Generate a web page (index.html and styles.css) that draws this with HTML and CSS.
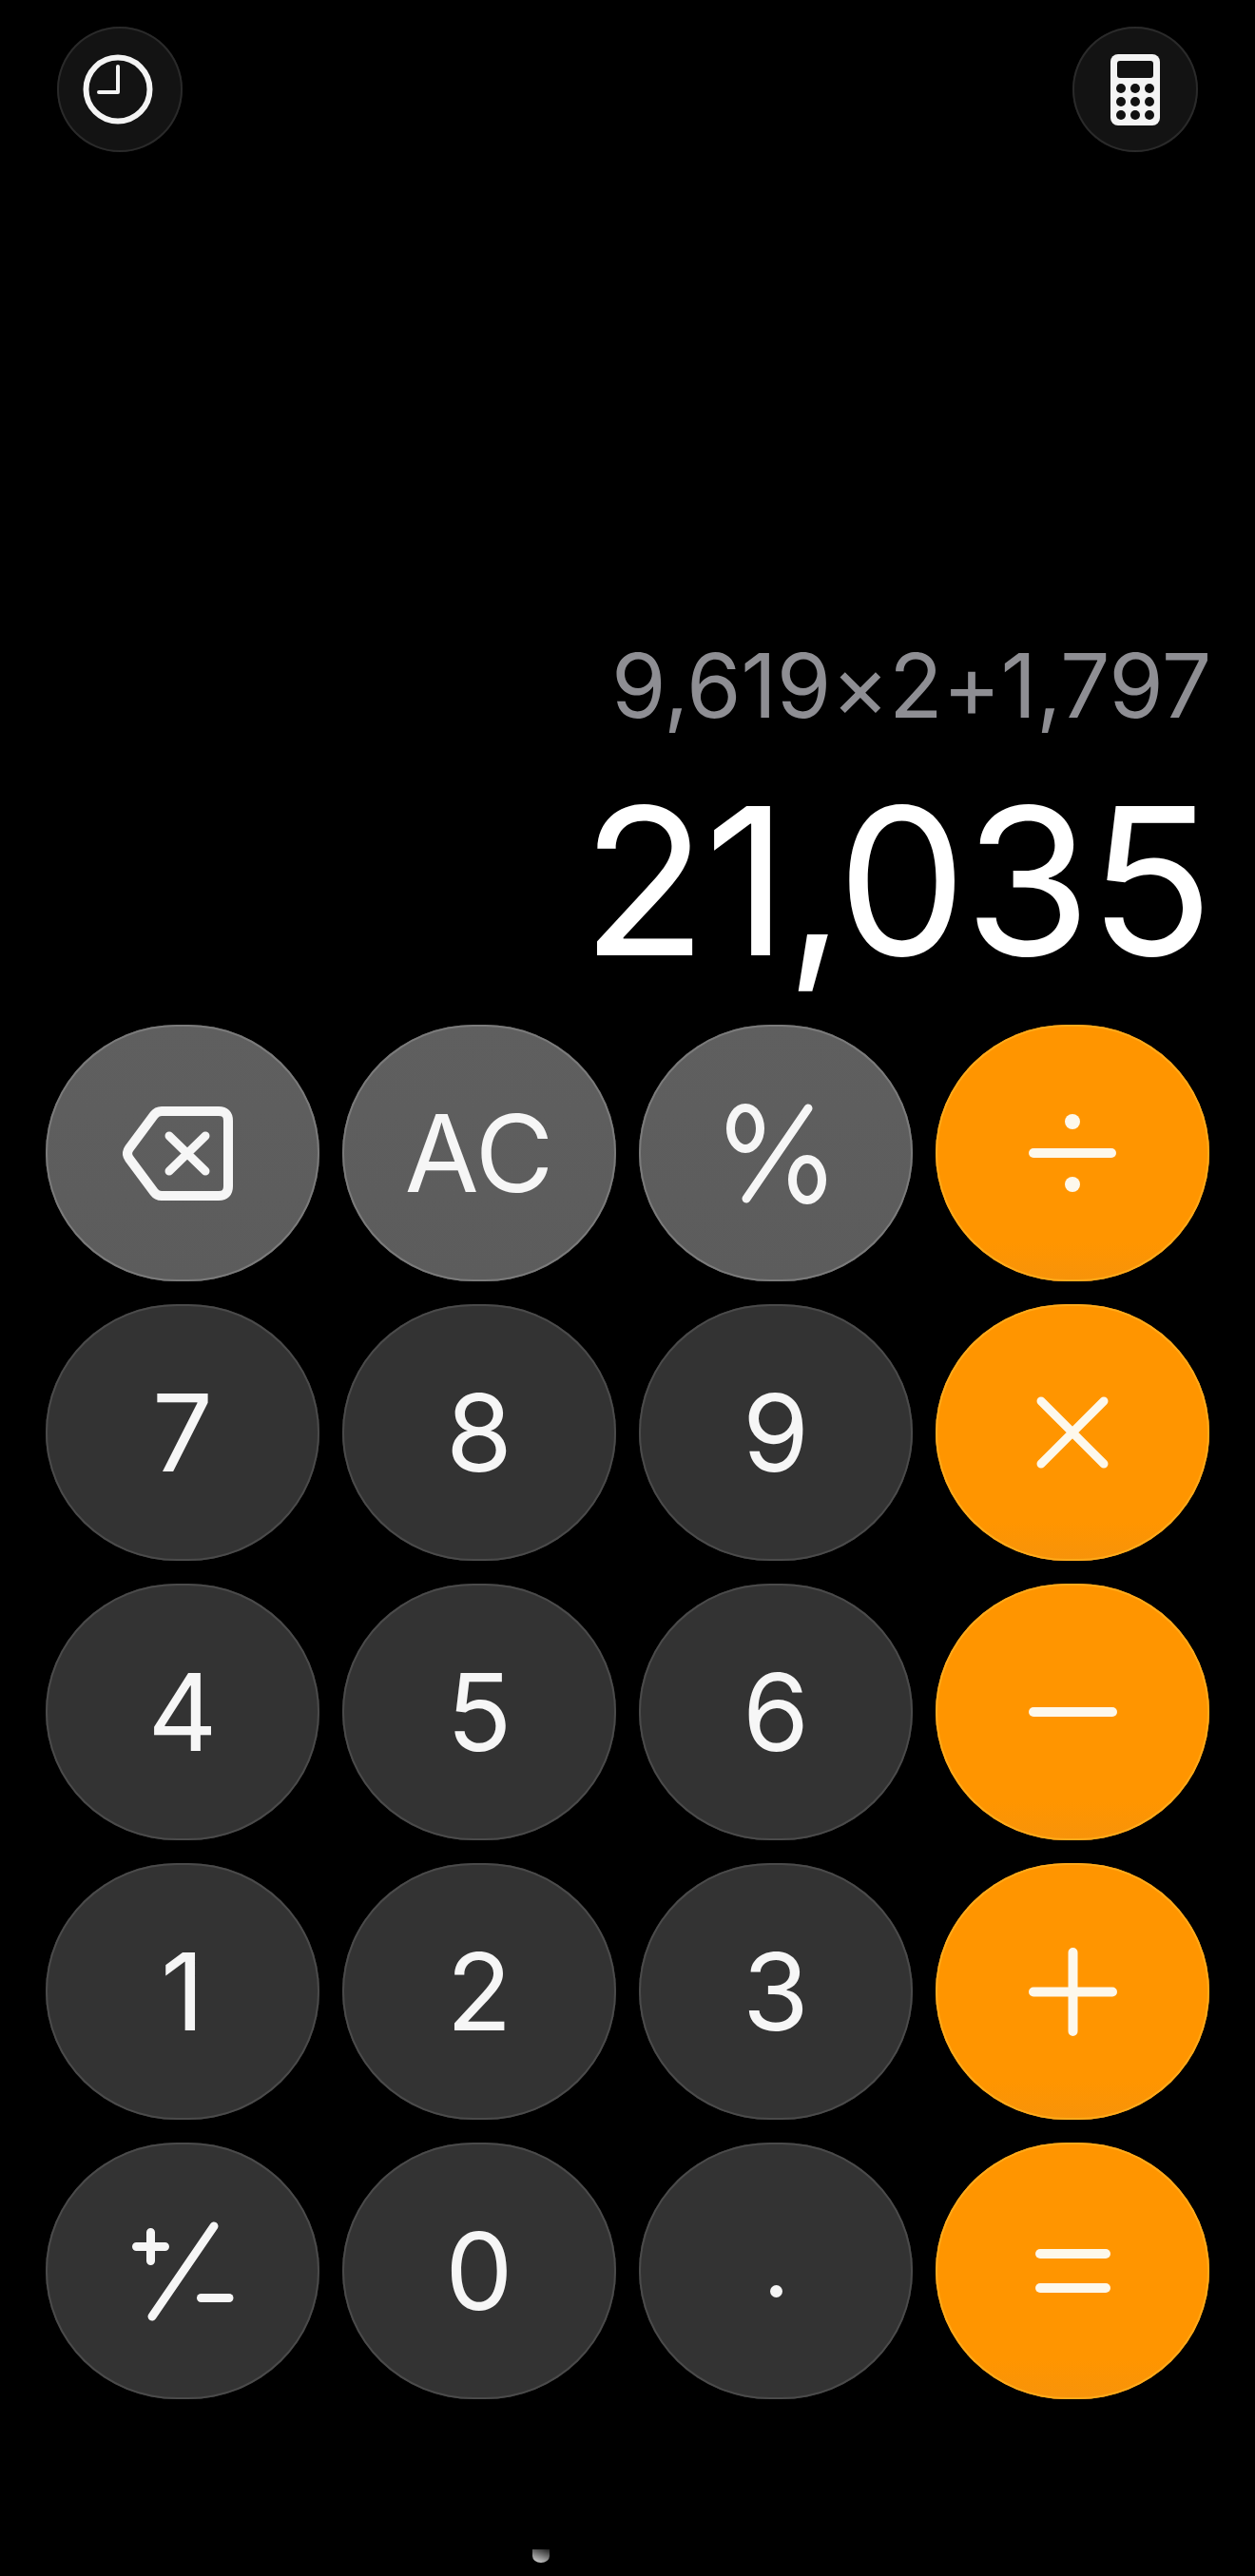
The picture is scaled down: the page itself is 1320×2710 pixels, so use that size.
FILE: index.html
```html
<!DOCTYPE html>
<html lang="en">

<head>
    <meta charset="UTF-8">
    <meta name="viewport" content="width=device-width, initial-scale=1.0">
    <title>Calculator</title>
    <link rel="stylesheet" href="styles.css">
</head>

<body>
    <div class="page-container">
        <!-- top buttons -->
        <div class="toolbar">
            <div class="tool-btn">
                <svg class="clock-icon" width="74" height="74" viewBox="0 0 74 74" fill="none" stroke="#f4f4f4" stroke-linecap="round" stroke-linejoin="round">
                    <circle cx="37" cy="37" r="33.5" stroke-width="6" />
                    <path d="M37 13V40H17" stroke-width="4" />
                </svg>
            </div>
            <div class="tool-btn">
                <svg width="52" height="75" viewBox="0 0 52 75">
                    <rect width="52" height="75" rx="8" fill="#f4f4f4" />
                    <rect x="7" y="7" width="38" height="18" rx="3" fill="#111" />
                    <g fill="#111">
                        <circle cx="11" cy="36" r="5" /><circle cx="26" cy="36" r="5" /><circle cx="41" cy="36" r="5" />
                        <circle cx="11" cy="50" r="5" /><circle cx="26" cy="50" r="5" /><circle cx="41" cy="50" r="5" />
                        <circle cx="11" cy="64" r="5" /><circle cx="26" cy="64" r="5" /><circle cx="41" cy="64" r="5" />
                    </g>
                </svg>
            </div>
        </div>

        <!-- display -->
        <div class="display">
            <div class="expression">9,619×2+1,797</div>
            <div class="result">21,035</div>
        </div>

        <!-- keypad -->
        <div class="keypad">
            <div class="key key-fn">
                <svg class="backspace-icon" width="116" height="99" viewBox="0 0 116 99" fill="none" stroke="#f6f6f6" stroke-linecap="round" stroke-linejoin="round">
                    <path d="M41 5H101Q111 5 111 15V84Q111 94 101 94H41Q36 94 33 90L7 55Q3 49.5 7 44L33 9Q36 5 41 5Z" stroke-width="10" />
                    <path d="M49 31L87 68M87 31L49 68" stroke-width="9" />
                </svg>
            </div>
            <div class="key key-fn">AC</div>
            <div class="key key-fn">
                <svg width="105" height="108" viewBox="0 0 105 108" fill="none" stroke="#f6f6f6" stroke-linecap="round">
                    <ellipse cx="20" cy="28" rx="15.5" ry="21.5" stroke-width="9" />
                    <ellipse cx="85" cy="82" rx="15.5" ry="21.5" stroke-width="9" />
                    <path d="M86 7L21 102" stroke-width="9" />
                </svg>
            </div>
            <div class="key key-op">
                <svg width="92" height="82" viewBox="0 0 92 82" fill="#fdf8ec">
                    <rect y="36" width="92" height="10" rx="5" />
                    <ellipse cx="46" cy="8" rx="8" ry="8" />
                    <ellipse cx="46" cy="74" rx="8" ry="8" />
                </svg>
            </div>

            <div class="key key-num">7</div>
            <div class="key key-num">8</div>
            <div class="key key-num">9</div>
            <div class="key key-op">
                <svg width="76" height="76" viewBox="0 0 76 76" fill="none" stroke="#fdf8ec" stroke-width="9" stroke-linecap="round">
                    <path d="M5 5L71 71M71 5L5 71" />
                </svg>
            </div>

            <div class="key key-num">4</div>
            <div class="key key-num">5</div>
            <div class="key key-num">6</div>
            <div class="key key-op">
                <svg width="93" height="10" viewBox="0 0 93 10" fill="#fdf8ec">
                    <rect width="93" height="10" rx="5" />
                </svg>
            </div>

            <div class="key key-num">1</div>
            <div class="key key-num">2</div>
            <div class="key key-num">3</div>
            <div class="key key-op">
                <svg width="93" height="93" viewBox="0 0 93 93" fill="none" stroke="#fdf8ec" stroke-width="10" stroke-linecap="round">
                    <path d="M46.5 5V88M5 46.5H88" />
                </svg>
            </div>

            <div class="key key-num">
                <svg width="107" height="106" viewBox="0 0 107 106" fill="none" stroke="#f6f6f6" stroke-linecap="round">
                    <path d="M4.5 27.5H34.5M19.5 12.5V42.5" stroke-width="9" />
                    <path d="M86 6L21 101" stroke-width="9" />
                    <path d="M72.5 81.5H102" stroke-width="9" />
                </svg>
            </div>
            <div class="key key-num">0</div>
            <div class="key key-num"><span class="key-dot"></span></div>
            <div class="key key-op">
                <svg width="79" height="46" viewBox="0 0 79 46" fill="#fdf8ec">
                    <rect width="79" height="10" rx="5" />
                    <rect y="36" width="79" height="10" rx="5" />
                </svg>
            </div>
        </div>

        <div class="smudge"></div>
    </div>
</body>

</html>
```

FILE: styles.css
```css
/* base */
body {
    margin: 0;
    background-color: #000;
    font-family: Inter, "Liberation Sans", Arial, sans-serif;
    overflow: hidden;
}

.page-container {
    position: relative;
    width: 1320px;
    height: 2710px;
    overflow: hidden;
}

/* top buttons */
.toolbar {
    display: flex;
    justify-content: space-between;
    padding: 28px 60px 0;
}

.tool-btn {
    display: flex;
    justify-content: center;
    align-items: center;
    width: 132px;
    height: 132px;
    border-radius: 50%;
    background-color: #131313;
    box-shadow: inset 0 0 0 2px #2a2a2a;
}

.clock-icon {
    margin-right: 4px;
}

/* display */
.display {
    display: flex;
    flex-direction: column;
    align-items: flex-end;
    padding: 506px 46px 0 0;
}

.expression {
    font-size: 93px;
    line-height: 110px;
    letter-spacing: -0.4px;
    color: #8e8e93;
}

.result {
    margin-top: 21px;
    font-size: 216px;
    line-height: 260px;
    letter-spacing: -2.5px;
    color: #fff;
}

/* keypad */
.keypad {
    display: grid;
    grid-template-columns: repeat(4, 288px);
    grid-auto-rows: 270px;
    gap: 24px;
    padding: 0 48px;
    margin-top: 21px;
}

.key {
    display: flex;
    justify-content: center;
    align-items: center;
    border-radius: 138px / 135px;
    font-size: 113px;
    color: #f6f6f6;
}

.key-num {
    background-color: #333;
    box-shadow: inset 0 0 0 2px #4a4a4a;
}

.key-fn {
    background: linear-gradient(180deg, #5f5f5f, #5c5c5c);
    box-shadow: inset 0 0 0 2px #7a7a7a;
}

.key-op {
    background: linear-gradient(180deg, #ff9500 85%, #f7930a);
    box-shadow: inset 0 0 0 2px #ffaa1a;
}

.backspace-icon {
    margin-right: 10px;
}

.key-dot {
    width: 13px;
    height: 13px;
    margin-top: 42px;
    border-radius: 50%;
    background-color: #f6f6f6;
}

/* leftover of the home bar */
.smudge {
    position: absolute;
    left: 560px;
    top: 2682px;
    width: 18px;
    height: 14px;
    border-radius: 0 0 50% 50%;
    background: linear-gradient(200deg, #222, #ddd);
}
```
